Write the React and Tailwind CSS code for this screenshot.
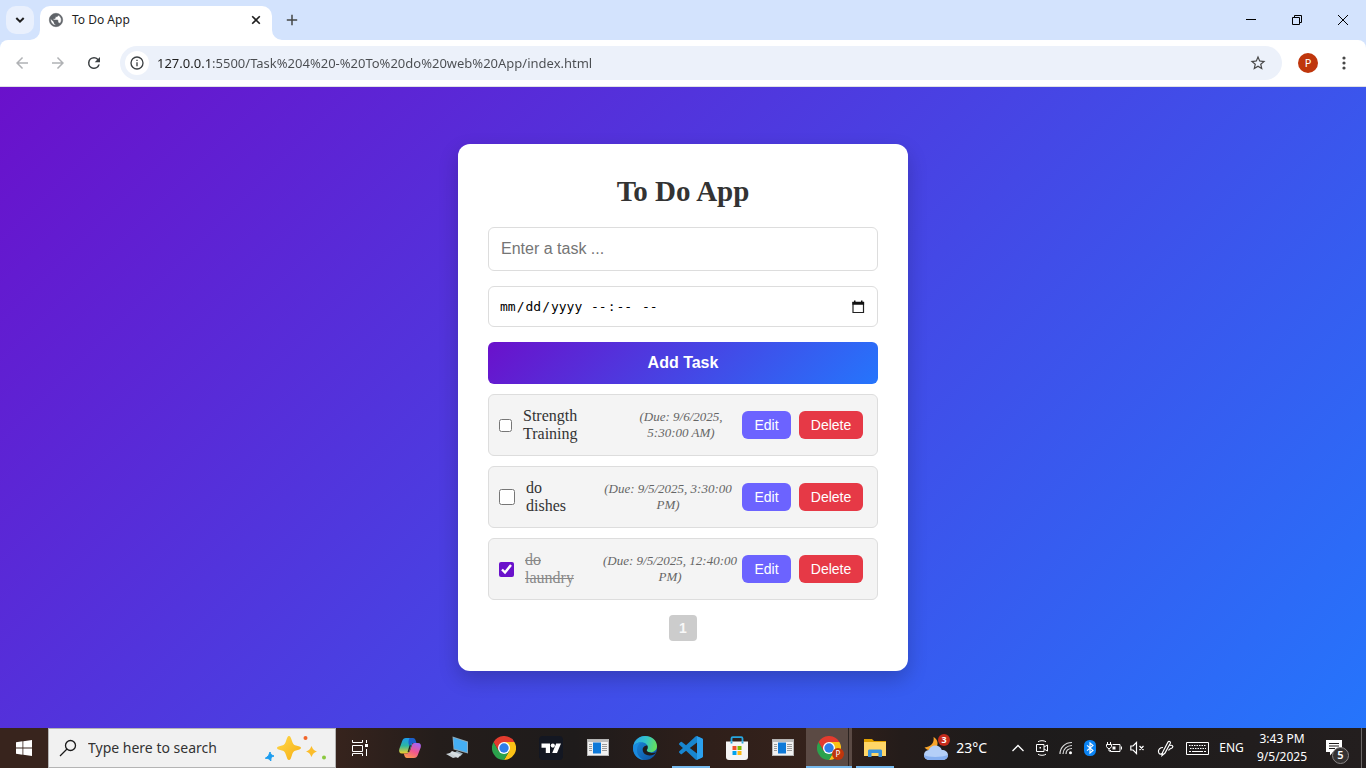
import React, { useRef, useState } from "react";

function Material({ d, className }) {
  return (
    <svg viewBox="0 0 24 24" fill="currentColor" className={className} aria-hidden="true">
      <path d={d} />
    </svg>
  );
}

const BACK = "M20 11H7.83l5.59-5.59L12 4l-8 8 8 8 1.41-1.41L7.83 13H20v-2z";
const FORWARD = "M12 4l-1.41 1.41L16.17 11H4v2h12.17l-5.58 5.59L12 20l8-8z";
const RELOAD =
  "M17.65 6.35A7.95 7.95 0 0 0 12 4a8 8 0 1 0 7.73 10h-2.08A6 6 0 1 1 12 6c1.66 0 3.14.69 4.22 1.78L13 11h7V4l-2.35 2.35z";
const INFO =
  "M11 7h2v2h-2zm0 4h2v6h-2zm1-9a10 10 0 1 0 0 20 10 10 0 0 0 0-20zm0 18a8 8 0 1 1 0-16 8 8 0 0 1 0 16z";
const GLOBE =
  "M12 2C6.48 2 2 6.48 2 12s4.48 10 10 10 10-4.48 10-10S17.52 2 12 2zm-1 17.93c-3.95-.49-7-3.85-7-7.93 0-.62.08-1.21.21-1.79L9 15v1c0 1.1.9 2 2 2v1.93zm6.9-2.54c-.26-.81-1-1.39-1.9-1.39h-1v-3c0-.55-.45-1-1-1H8v-2h2c.55 0 1-.45 1-1V7h2c1.1 0 2-.9 2-2v-.41c2.93 1.19 5 4.06 5 7.41 0 2.08-.8 3.97-2.1 5.39z";
const STAR =
  "M22 9.24l-7.19-.62L12 2 9.19 8.63 2 9.24l5.46 4.73L5.82 21 12 17.27 18.18 21l-1.63-7.03L22 9.24zM12 15.4l-3.76 2.27 1-4.28-3.32-2.88 4.38-.38L12 6.1l1.71 4.04 4.38.38-3.32 2.88 1 4.28L12 15.4z";
const VSCODE =
  "M23.15 2.587L18.21.21a1.494 1.494 0 0 0-1.705.29l-9.46 8.63-4.12-3.128a.999.999 0 0 0-1.276.057L.327 7.261A1 1 0 0 0 .326 8.74L3.899 12 .326 15.26a1 1 0 0 0 .001 1.479L1.65 17.94a.999.999 0 0 0 1.276.057l4.12-3.128 9.46 8.63a1.492 1.492 0 0 0 1.704.29l4.942-2.377A1.5 1.5 0 0 0 24 20.06V3.939a1.5 1.5 0 0 0-.85-1.352zm-5.146 14.861L10.826 12l7.178-5.448v10.896z";

function TitleBar() {
  return (
    <header className="flex h-10 items-start bg-[#d3e3fd] pl-1.5 text-[#1f1f1f]">
      <button aria-label="Search tabs" className="mt-1.5 flex size-7 items-center justify-center rounded-[10px] bg-[#e9f0fd]">
        <svg viewBox="0 0 10 10" className="size-2.5" fill="none" stroke="currentColor" strokeWidth="2" aria-hidden="true">
          <path d="M1.3 3l3.7 3.7L8.7 3" />
        </svg>
      </button>
      <div className="relative mt-1.5 ml-1.5 flex h-[34px] w-[232px] items-center rounded-t-[10px] bg-white pr-2.5 pb-1.5 pl-2">
        <svg viewBox="0 0 10 10" className="absolute bottom-0 -left-2.5 size-2.5" fill="#fff" aria-hidden="true">
          <path d="M10 0A10 10 0 0 1 0 10H10z" />
        </svg>
        <svg viewBox="0 0 10 10" className="absolute -right-2.5 bottom-0 size-2.5" fill="#fff" aria-hidden="true">
          <path d="M0 0A10 10 0 0 0 10 10H0z" />
        </svg>
        <svg viewBox="0 0 24 24" fill="currentColor" stroke="currentColor" strokeWidth="0.8" className="size-4 text-[#5f6368]" aria-hidden="true">
          <path d={GLOBE} />
        </svg>
        <span className="ml-2 flex-1 text-xs">To Do App</span>
        <button aria-label="Close tab" className="flex size-3 items-center justify-center">
          <svg viewBox="0 0 10 10" className="size-2.5" stroke="currentColor" strokeWidth="1.6" aria-hidden="true">
            <path d="M1.2 1.2l7.6 7.6M8.8 1.2L1.2 8.8" />
          </svg>
        </button>
      </div>
      <button aria-label="New tab" className="mt-1.5 ml-1.5 flex size-7 items-center justify-center text-[#444746]">
        <svg viewBox="0 0 12 12" className="size-3" stroke="currentColor" strokeWidth="1.5" aria-hidden="true">
          <path d="M6 .8v10.4M.8 6h10.4" />
        </svg>
      </button>
      <div className="ml-auto flex h-10 text-black">
        <button aria-label="Minimize" className="flex w-[46px] items-center justify-center">
          <svg viewBox="0 0 10 10" className="size-2.5" stroke="currentColor" aria-hidden="true">
            <path d="M0 4.5h10" />
          </svg>
        </button>
        <button aria-label="Restore" className="flex w-[46px] items-center justify-center">
          <svg viewBox="0 0 10 10" className="size-2.5" stroke="currentColor" fill="none" aria-hidden="true">
            <path d="M.5 2.5h7v7h-7zM2.5 2V.5h7v7H8" />
          </svg>
        </button>
        <button aria-label="Close window" className="flex w-[46px] items-center justify-center">
          <svg viewBox="0 0 10 10" className="size-2.5" stroke="currentColor" aria-hidden="true">
            <path d="M0 0l10 10M10 0L0 10" />
          </svg>
        </button>
      </div>
    </header>
  );
}

function Toolbar() {
  return (
    <div className="bg-[#d3e3fd]">
      <nav className="flex h-[47px] items-center rounded-t-lg border-b border-[#dfe1e5] bg-white pl-1">
        <button aria-label="Back" className="flex w-9 justify-center text-[#b0b2b5]">
          <Material d={BACK} className="size-[18px]" />
        </button>
        <button aria-label="Forward" className="flex w-9 justify-center text-[#b0b2b5]">
          <Material d={FORWARD} className="size-[18px]" />
        </button>
        <button aria-label="Reload" className="flex w-9 justify-center text-[#3c4043]">
          <Material d={RELOAD} className="size-[18px]" />
        </button>
        <div className="ml-2 flex h-[34px] flex-1 items-center rounded-full bg-[#ecf1fa] pr-[15px] pl-[5px]">
          <button aria-label="Site information" className="flex size-6 items-center justify-center rounded-full bg-white text-[#3c4043]">
            <Material d={INFO} className="size-4" />
          </button>
          <input
            aria-label="Address"
            defaultValue="127.0.0.1:5500/Task%204%20-%20To%20do%20web%20App/index.html"
            className="ml-2 h-6 flex-1 bg-[linear-gradient(90deg,#1f1f1f_56px,#4a4d51_56px)] bg-clip-text font-['Noto_Sans',sans-serif] text-[13px] text-transparent caret-black outline-none"
          />
          <button aria-label="Bookmark this tab" className="text-[#474747]">
            <Material d={STAR} className="size-[18px]" />
          </button>
        </div>
        <button aria-label="Profile" className="ml-4 flex size-5 items-center justify-center rounded-full bg-[#bf360c] text-[11px] text-white">
          P
        </button>
        <button aria-label="Menu" className="mr-[13px] ml-[17px] flex w-[18px] justify-center text-[#474747]">
          <svg viewBox="0 0 4 14" className="h-3.5 w-1" fill="currentColor" aria-hidden="true">
            <circle cx="2" cy="2" r="1.6" />
            <circle cx="2" cy="7" r="1.6" />
            <circle cx="2" cy="12" r="1.6" />
          </svg>
        </button>
      </nav>
    </div>
  );
}

const INITIAL_TASKS = [
  { id: 1, text: "Strength Training", due: "(Due: 9/6/2025, 5:30:00 AM)", done: false, box: "size-[13px]", dueWidth: "w-[114px]" },
  { id: 2, text: "do dishes", due: "(Due: 9/5/2025, 3:30:00 PM)", done: false, box: "size-4", dueWidth: "w-[140px]" },
  { id: 3, text: "do laundry", due: "(Due: 9/5/2025, 12:40:00 PM)", done: true, box: "size-[15px]", dueWidth: "w-[136px]" },
];

function TaskRow({ task, onToggle, onDelete }) {
  const id = "task-" + task.id;
  return (
    <li className="flex h-[62px] items-center rounded-md border border-[#ddd] bg-[#f4f4f4] pr-3.5 pl-2.5">
      <input
        id={id}
        type="checkbox"
        checked={task.done}
        onChange={onToggle}
        className={"shrink-0 accent-[#6a11cb] " + task.box}
      />
      <label
        htmlFor={id}
        className={
          "ml-[11px] w-14 text-left text-base leading-[18px] " + (task.done ? "text-[#888] line-through" : "text-[#333]")
        }
      >
        {task.text}
      </label>
      <em className={"ml-auto text-center text-[13px] leading-4 text-[#666] " + task.dueWidth}>{task.due}</em>
      <button className="ml-1 h-7 w-[49px] rounded-md bg-[#6c63ff] font-['Liberation_Sans',Arial,sans-serif] text-sm text-white">
        Edit
      </button>
      <button
        onClick={onDelete}
        className="ml-2 h-7 w-16 rounded-md bg-[#e63946] font-['Liberation_Sans',Arial,sans-serif] text-sm text-white"
      >
        Delete
      </button>
    </li>
  );
}

function DueField() {
  const date = useRef(null);
  return (
    <div className="flex h-[41px] items-center rounded-md border border-[#ddd] pr-3 pl-2.5 font-['DejaVu_Sans_Mono',monospace] text-[13px] text-black">
      <input
        ref={date}
        type="date"
        aria-label="Due date"
        className="w-[85px] outline-none [&::-webkit-calendar-picker-indicator]:hidden"
      />
      <input
        type="time"
        aria-label="Due time"
        className="ml-1.5 outline-none [&::-webkit-calendar-picker-indicator]:hidden"
      />
      <button type="button" aria-label="Open calendar" className="ml-auto" onClick={() => date.current.showPicker()}>
        <svg viewBox="0 0 14 14" className="size-3.5" aria-hidden="true">
          <path d="M2 2.5h10.500V12.500H2z" fill="none" stroke="#222" strokeWidth="1.2" />
          <path d="M1.4 1.8h11.700v3H1.400zM3 .5h1.500v2H3zM10 .5h1.500v2H10z" fill="#111" />
        </svg>
      </button>
    </div>
  );
}

function TodoCard() {
  const [tasks, setTasks] = useState(INITIAL_TASKS);
  const toggle = (id) => setTasks(tasks.map((t) => (t.id === id ? { ...t, done: !t.done } : t)));
  const remove = (id) => setTasks(tasks.filter((t) => t.id !== id));
  return (
    <section className="w-full max-w-[450px] rounded-xl bg-white p-[30px] text-center font-['Liberation_Serif','Times_New_Roman',serif] shadow-[0_8px_20px_rgba(0,0,0,0.2)]">
      <h1 className="mb-[18px] text-[29px] leading-[35px] font-bold text-[#333]">To Do App</h1>
      <form className="flex flex-col gap-[15px]" onSubmit={(e) => e.preventDefault()}>
        <input
          type="text"
          aria-label="Task"
          placeholder="Enter a task ..."
          className="h-11 rounded-md border border-[#ddd] px-3 font-['Liberation_Sans',Arial,sans-serif] text-base outline-none placeholder:text-[#757575]"
        />
        <DueField />
        <button className="h-[42px] rounded-md bg-[linear-gradient(135deg,#6a11cb,#2575fc)] font-['Liberation_Sans',Arial,sans-serif] text-base font-bold text-white">
          Add Task
        </button>
      </form>
      <ul className="mt-2.5 flex flex-col gap-2.5">
        {tasks.map((t) => (
          <TaskRow key={t.id} task={t} onToggle={() => toggle(t.id)} onDelete={() => remove(t.id)} />
        ))}
      </ul>
      <div className="mt-[15px] flex justify-center">
        <button
          disabled
          aria-label="Page 1"
          className="h-[26px] w-7 rounded-sm bg-[#ccc] font-['Liberation_Sans',Arial,sans-serif] text-sm font-bold text-[#f8f8f8]"
        >
          1
        </button>
      </div>
    </section>
  );
}

function ChromeLogo({ className }) {
  const wedge = "M1.6 6A12 12 0 0 1 22.4 6H12L6.8 15z";
  return (
    <svg viewBox="0 0 24 24" className={className} aria-hidden="true">
      <path d={wedge} fill="#fbc116" transform="rotate(120 12 12)" />
      <path d={wedge} fill="#2ba24c" transform="rotate(240 12 12)" />
      <path d={wedge} fill="#e33b2e" />
      <circle cx="12" cy="12" r="6" fill="#fff" />
      <circle cx="12" cy="12" r="4.7" fill="#2f7de9" />
    </svg>
  );
}

function TaskViewIcon() {
  return (
    <svg viewBox="0 0 16 16" className="size-4" fill="none" stroke="#fff" aria-hidden="true">
      <path d="M.5 0v2.5h10V0M.5 5.5h10v6H.5zM.5 16v-2.5h10V16M14.5 0v3M14.5 9v7" />
      <path d="M13 4h3v3h-3z" fill="#fff" stroke="none" />
    </svg>
  );
}

function CopilotIcon() {
  return (
    <svg viewBox="0 0 24 24" className="size-6" aria-hidden="true">
      <defs>
        <linearGradient id="cpA" x1="0" y1="0" x2="0" y2="1">
          <stop offset="0" stopColor="#1c9bf0" />
          <stop offset=".5" stopColor="#2cb6a0" />
          <stop offset="1" stopColor="#f4cf2b" />
        </linearGradient>
        <linearGradient id="cpB" x1="0.7" y1="0" x2="0.2" y2="1">
          <stop offset="0" stopColor="#a864f0" />
          <stop offset=".5" stopColor="#f0568f" />
          <stop offset="1" stopColor="#fb9a4b" />
        </linearGradient>
      </defs>
      <path d="M8 2h7l-1 6-2 6c-.8 2.5-1.5 3.5-4 3.5H4C1.5 17.5.6 15.5 1.300 13L4.200 5C4.900 3 6 2 8 2z" fill="url(#cpA)" />
      <path d="M11.5 2H15c1.6 0 2.2 1 2.7 2.5L18.5 7h-3c-1.5 0-2.2.8-2.7 2.5l-.6 1.5c-1.5-2-2.5-5-.7-9z" fill="#1b5fcc" />
      <path d="M16 22H9c-1.6 0-2.2-1-2.6-2.5L5.700 17.5h2.600c2.2 0 3.3-1.2 4-3.5l1.500-4.500C14.300 7.800 15 7 16.500 7H20c2.5 0 3.4 2 2.700 4.500L19.800 19c-.7 2-1.800 3-3.800 3z" fill="url(#cpB)" />
      <path d="M11.5 9.5l1.5-.3-2 6.600-1.500.4z" fill="#201c1c" />
    </svg>
  );
}

function RemoteIcon() {
  return (
    <svg viewBox="0 0 24 24" className="size-6" aria-hidden="true">
      <path d="M7.5.5L23 5.5V17.5L8.5 13.5z" fill="#8fa9b8" />
      <path d="M8.5 1.8L22 6.2v10L9.2 12.600z" fill="#45aef3" />
      <path d="M12 15l6 2.5-3 3-7-3z" fill="#9fb0ba" />
      <path d="M7 15l9 3.5-3 3.5-9-4z" fill="#d7dee2" />
      <path d="M1 18l4-1 7 4-4 1z" fill="#c9d1d6" />
    </svg>
  );
}

function TradingViewIcon() {
  return (
    <svg viewBox="0 0 24 24" className="size-6" aria-hidden="true">
      <rect width="24" height="24" rx="4" fill="#131722" />
      <path d="M2.5 7.5h8.500v9.500h-4.200v-5.300H2.500zM17.200 7.500H22l-4 9.500h-4.800z" fill="#fff" />
      <circle cx="13.8" cy="9.6" r="2.1" fill="#fff" />
    </svg>
  );
}

function RunIcon() {
  return (
    <svg viewBox="0 0 22 18" className="h-[18px] w-[22px]" aria-hidden="true">
      <rect x=".5" y=".5" width="21" height="16" fill="#f1f1f1" stroke="#b5b5b5" />
      <path d="M1 2h20" stroke="#888" />
      <rect x="6" y="3.5" width="8" height="11" fill="#0e79d8" />
      <path d="M2 5.5h3M2 7.5h3M2 9.5h3M2 11.5h3M15 5.5h5M15 7.5h5M15 9.5h5M15 11.5h5" stroke="#9a9a9a" />
    </svg>
  );
}

function EdgeIcon() {
  return (
    <svg viewBox="0 0 24 24" className="size-6" aria-hidden="true">
      <defs>
        <linearGradient id="edTop" x1="0" y1="0.3" x2="1" y2="0.5">
          <stop offset="0" stopColor="#2aa4e8" />
          <stop offset=".5" stopColor="#33c3c9" />
          <stop offset="1" stopColor="#66e05a" />
        </linearGradient>
        <linearGradient id="edLow" x1="0" y1="0" x2="1" y2="1">
          <stop offset="0" stopColor="#1b8fe0" />
          <stop offset="1" stopColor="#0c4f9e" />
        </linearGradient>
      </defs>
      <circle cx="12" cy="12" r="12" fill="url(#edLow)" />
      <path d="M.3 10.5C1.300 4.200 6 0 12 0c7 0 12 4.800 12 10.200 0 3.600-2.800 6-6.300 6-2.700 0-4-1-4-2 0-.7 1-1.100 1-3 0-2.700-2.700-4.900-6.200-4.900C5 6.300 1.500 8 .3 10.500z" fill="url(#edTop)" />
      <path d="M8.5 6.3c-2 1-4.500 3.500-4.500 8 0 4.500 3 8.500 7.500 9.700C5 24 0 18.500 0 12c0-3 4-5.700 8.500-5.700z" fill="#1a8ade" />
      <path d="M13.7 14.2c0-.7 1-1.100 1-3 0-.6-.1-1.200-.4-1.700-3 0-4.800 2.200-4.600 4.500.3 3.500 3.400 5.600 7.300 5.400 2.400-.1 4.500-1 6.500-3.200-1.500.6-3.800.9-5.800.5-2.500-.4-4-1.500-4-2.500z" fill="#201c1c" />
    </svg>
  );
}

function StoreIcon() {
  return (
    <svg viewBox="0 0 24 24" className="size-6" aria-hidden="true">
      <path d="M6.5 6V2.5c0-.8.5-1.300 1.300-1.300h8.400c.8 0 1.300.5 1.300 1.300V6" fill="none" stroke="#27a7e0" strokeWidth="1.8" />
      <path d="M1 5.5h22V21c0 2-1 3-3 3H4c-2 0-3-1-3-3z" fill="#f5f5f5" />
      <path d="M7.5 10h4v4h-4z" fill="#f0502a" />
      <path d="M12.5 10h4v4h-4z" fill="#7fba00" />
      <path d="M7.5 15h4v4h-4z" fill="#00a3ee" />
      <path d="M12.5 15h4v4h-4z" fill="#fdb813" />
      <path d="M6.5 7.5V5.5M17.5 7.5V5.5" stroke="#27a7e0" strokeWidth="1.8" />
    </svg>
  );
}

function FolderIcon() {
  return (
    <svg viewBox="0 0 22 20" className="h-5 w-[22px]" aria-hidden="true">
      <path d="M0 1h8l2 2h12v6H0z" fill="#e0a000" />
      <path d="M0 4h22v14H0z" fill="#ffd667" />
      <path d="M4 19v-6c0-1 .6-1.5 1.5-1.5h11c.9 0 1.5.5 1.5 1.5v6h-3.5v-4h-7v4z" fill="#3a93dc" />
    </svg>
  );
}

function TaskButton({ label, children, running }) {
  return (
    <button aria-label={label} className="relative flex h-10 w-[46px] items-center justify-center">
      {children}
      {running && <span className="absolute inset-x-1 bottom-0 h-0.5 bg-[#76b9ed]" />}
    </button>
  );
}

function SearchBox() {
  return (
    <label className="flex h-10 w-72 items-center border border-[#b4b4b4] bg-[#f1f1f1] pr-2 pl-2.5">
      <svg viewBox="0 0 18 18" className="size-[18px]" fill="none" stroke="#1a1a1a" strokeWidth="1.3" aria-hidden="true">
        <circle cx="11.5" cy="6.5" r="5" />
        <path d="M8 10L1 17" />
      </svg>
      <input
        type="search"
        aria-label="Type here to search"
        placeholder="Type here to search"
        className="ml-[11px] min-w-0 flex-1 bg-transparent text-sm outline-none placeholder:text-[#333]"
      />
      <svg viewBox="0 0 62 26" className="h-[26px] w-[62px]" aria-hidden="true">
        <defs>
          <linearGradient id="spark" x1="0" y1="0" x2="1" y2="1">
            <stop offset="0" stopColor="#ffd84a" />
            <stop offset="1" stopColor="#f6ae12" />
          </linearGradient>
        </defs>
        <path d="M24 1c1.5 0 2 2 3 5s1.5 3.8 4 4.6 5 1 5 2.4-2.5 1.7-5 2.5-3 1.5-4 4.5-1.5 5-3 5-2-2-3-5-1.5-3.7-4-4.5-5-1-5-2.5 2.5-1.6 5-2.4 3-1.600 4-4.600 1.5-5 3-5z" fill="url(#spark)" />
        <path d="M46.500 11c1.8 3.8 1.8 4 5.500 5.500-3.700 1.500-3.700 1.700-5.500 5.500-1.800-3.800-1.800-4-5.500-5.500 3.700-1.500 3.700-1.700 5.500-5.500z" fill="#fbbd2b" />
        <path d="M5 17c1 2.800 1.5 3 4 4-2.800 1-3.200 1.500-3.200 5-1.600-2.200-2.200-2.400-5.500-2.800 3-1.700 3.400-2.700 4.700-6.200z" fill="#1c9df0" stroke="#1c9df0" />
        <circle cx="40.5" cy="3" r="2" fill="#f1652a" />
        <circle cx="59" cy="22.5" r="2" fill="#8bc83f" />
      </svg>
    </label>
  );
}

function TrayButton({ label, children }) {
  return (
    <button aria-label={label} className="flex h-10 w-6 items-center justify-center">
      {children}
    </button>
  );
}

function Tray() {
  return (
    <div className="ml-auto flex items-center pr-1 text-xs text-white">
      <button className="mr-[19px] flex items-center gap-[7px] text-sm">
        <span className="relative">
          <svg viewBox="0 0 26 26" className="size-[26px]" aria-hidden="true">
            <path d="M10.5 2c1 5-2 10-9 10.5C4 16 11 16.5 14 11c1.5-3.5 0-7-3.5-9z" fill="#f8a52b" />
            <path d="M7 25c-3.5 0-6-2-6-5s2-4.8 4.8-5c1-3 3.5-4.5 6.5-4.5 3.2 0 5.5 1.7 6.500 4.500 3.500 0 6.200 2 6.200 5s-2.500 5-6 5z" fill="#b4cff8" />
            <path d="M7 25c-3.5 0-6-2-6-5 4 2.5 18 2.5 24 0 0 3-2.5 5-6 5z" fill="#86aff0" />
          </svg>
          <span className="absolute -top-px -right-px flex size-3 items-center justify-center rounded-full bg-[#c42b1c] text-[9px] font-bold text-white">
            3
          </span>
        </span>
        23°C
      </button>
      <TrayButton label="Show hidden icons">
        <svg viewBox="0 0 14 14" className="size-3.5" fill="none" stroke="#fff" strokeWidth="1.3" aria-hidden="true">
          <path d="M1.5 10L7 4.5 12.5 10" />
        </svg>
      </TrayButton>
      <TrayButton label="Camera">
        <svg viewBox="0 0 16 16" className="size-4" fill="none" stroke="#fff" aria-hidden="true">
          <path d="M4 1.8C6 .3 10 .3 12 1.8M4 14.2c2 1.5 6 1.5 8 0M2.5 4.500h7.500v7H2.500zM10 7l3.500-2v6L10 9" />
          <path d="M5.5 7h1.5v1.5H5.500z" fill="#fff" stroke="none" />
        </svg>
      </TrayButton>
      <TrayButton label="Network">
        <svg viewBox="0 0 14 14" className="size-3.5" fill="none" stroke="#ddd" strokeWidth="1.2" aria-hidden="true">
          <path d="M1 13C1 6.500 6 1.500 13 1.500M4 13c0-5 4-8.500 9-8.500M7 13c0-3.500 2.500-5.500 6-5.500" />
          <circle cx="11.5" cy="11.8" r="1.5" fill="#fff" stroke="none" />
        </svg>
      </TrayButton>
      <TrayButton label="Bluetooth">
        <svg viewBox="0 0 12 16" className="h-4 w-3" aria-hidden="true">
          <rect width="12" height="16" rx="5.5" fill="#0a84f5" />
          <path d="M3 5.300l6 5.200L6 13V3l3 2.500-6 5.200" fill="none" stroke="#fff" strokeWidth="1.1" />
        </svg>
      </TrayButton>
      <TrayButton label="Battery">
        <svg viewBox="0 0 16 14" className="h-3.5 w-4" fill="none" stroke="#fff" aria-hidden="true">
          <path d="M6.5 3.5h7.500v7H4.500V9M15.500 5.500v3M1.500 1v2.500M4.500 1v2.500M.5 3.500h5v2L4 7.500H2L.5 5.500zM3 7.500V10h1" />
          <path d="M6.500 5.500h3v3h-3z" fill="#fff" stroke="none" />
        </svg>
      </TrayButton>
      <TrayButton label="Volume muted">
        <svg viewBox="0 0 16 14" className="h-3.5 w-4" fill="none" stroke="#fff" strokeWidth="1.2" aria-hidden="true">
          <path d="M.8 5H3l3.500-3.500v11L3 9H.8zM9.500 5l4 4M13.500 5l-4 4" />
        </svg>
      </TrayButton>
      <button aria-label="Pen" className="flex w-8 justify-center">
        <svg viewBox="0 0 18 18" className="size-[18px]" fill="none" stroke="#fff" strokeWidth="1.2" aria-hidden="true">
          <path d="M5.5 13.500L11 3c.8-1.300 3-.3 2.300 1.200L8 14l-3 2.500zM6 8.500C3 8.500 1 10.500 1.500 13s2.500 2.500 3.500 1.500M13 6.500c2-.8 3.500.5 2.500 2s-3 .5-4 3" />
        </svg>
      </button>
      <button aria-label="Touch keyboard" className="flex w-[30px] justify-center">
        <svg viewBox="0 0 23 13" className="h-[13px] w-[23px]" fill="none" stroke="#fff" aria-hidden="true">
          <path d="M.5.5h22v12H.5z" />
          <path d="M3 3.5h17M4 6.5h16" strokeDasharray="1.5 1" />
          <path d="M3 9.5h2M6 9.5h11M18 9.5h2" />
        </svg>
      </button>
      <button className="w-[39px]">ENG</button>
      <button className="w-[62px] leading-[18px]">
        <time className="block">3:43 PM</time>
        <time className="block">9/5/2025</time>
      </button>
      <button aria-label="Notifications" className="relative mr-1 ml-1.5 flex h-10 w-[38px] items-center justify-center">
        <svg viewBox="0 0 16 16" className="mr-2 size-4" aria-hidden="true">
          <path d="M0 0h16v12H7l-3 3.500V12H0z" fill="#fff" />
          <path d="M3 3.5h10M3 6h10M3 8.5h6" stroke="#1f1b1b" />
        </svg>
        <span className="absolute right-2 bottom-1 flex size-[17px] items-center justify-center rounded-full border border-[#8a8686] bg-[#353232] text-[11px] font-semibold">
          5
        </span>
      </button>
      <span className="h-10 w-px bg-[#6b6767]" />
    </div>
  );
}

function Taskbar() {
  return (
    <footer className="flex h-10 bg-[linear-gradient(90deg,#38241d_0%,#38241d_24%,#241d1b_32%,#1e1b1b_42%,#2f1f1a_52%,#35221b_60%,#241c1a_66%,#1d1b1b_74%,#231e1e_100%)]">
      <button aria-label="Start" className="flex w-12 items-center justify-center">
        <svg viewBox="0 0 16 16" className="size-4" fill="#fff" aria-hidden="true">
          <path d="M0 2.2l6.500-.9v6.200H0zM7.300 1.200L16 0v7.500H7.300zM0 8.400h6.500v6.300L0 13.800zM7.300 8.400H16V16l-8.700-1.200z" />
        </svg>
      </button>
      <SearchBox />
      <button aria-label="Task view" className="flex w-[51px] items-center pl-4">
        <TaskViewIcon />
      </button>
      <div className="flex gap-px">
        <TaskButton label="Copilot"><CopilotIcon /></TaskButton>
        <TaskButton label="Remote Desktop"><RemoteIcon /></TaskButton>
        <TaskButton label="Chrome"><ChromeLogo className="size-6" /></TaskButton>
        <TaskButton label="TradingView"><TradingViewIcon /></TaskButton>
        <TaskButton label="Program"><RunIcon /></TaskButton>
        <TaskButton label="Edge"><EdgeIcon /></TaskButton>
      </div>
      <div className="flex">
        <TaskButton label="Visual Studio Code" running>
          <svg viewBox="0 0 24 24" className="size-6" aria-hidden="true">
            <path d={VSCODE} fill="#1886d0" />
            <path d="M18 .2l5.200 2.400c.5.300.8.800.8 1.400v16c0 .6-.3 1.100-.8 1.400L18 23.800z" fill="#2ba0ee" />
          </svg>
        </TaskButton>
        <TaskButton label="Microsoft Store"><StoreIcon /></TaskButton>
        <TaskButton label="Program window"><RunIcon /></TaskButton>
        <button aria-label="Chrome, To Do App" className="relative flex h-10 w-[46px] bg-[#5b4a44]">
          <span className="relative flex h-10 w-[43px] items-center justify-center border-r border-[#2c2320] pl-1">
            <ChromeLogo className="size-6" />
            <span className="absolute right-1 bottom-2 flex size-3 items-center justify-center rounded-full bg-[#bf360c] text-[8px] text-white">
              P
            </span>
          </span>
          <span className="absolute inset-x-0 bottom-0 h-0.5 bg-[#76b9ed]" />
        </button>
        <TaskButton label="File Explorer" running><FolderIcon /></TaskButton>
      </div>
      <Tray />
    </footer>
  );
}

export default function App() {
  return (
    <div className="flex min-h-screen flex-col font-['Noto_Sans','Open_Sans',sans-serif]">
      <TitleBar />
      <Toolbar />
      <main className="flex flex-1 items-center justify-center bg-[linear-gradient(135deg,#6a11cb,#2575fc)]">
        <TodoCard />
      </main>
      <Taskbar />
    </div>
  );
}
